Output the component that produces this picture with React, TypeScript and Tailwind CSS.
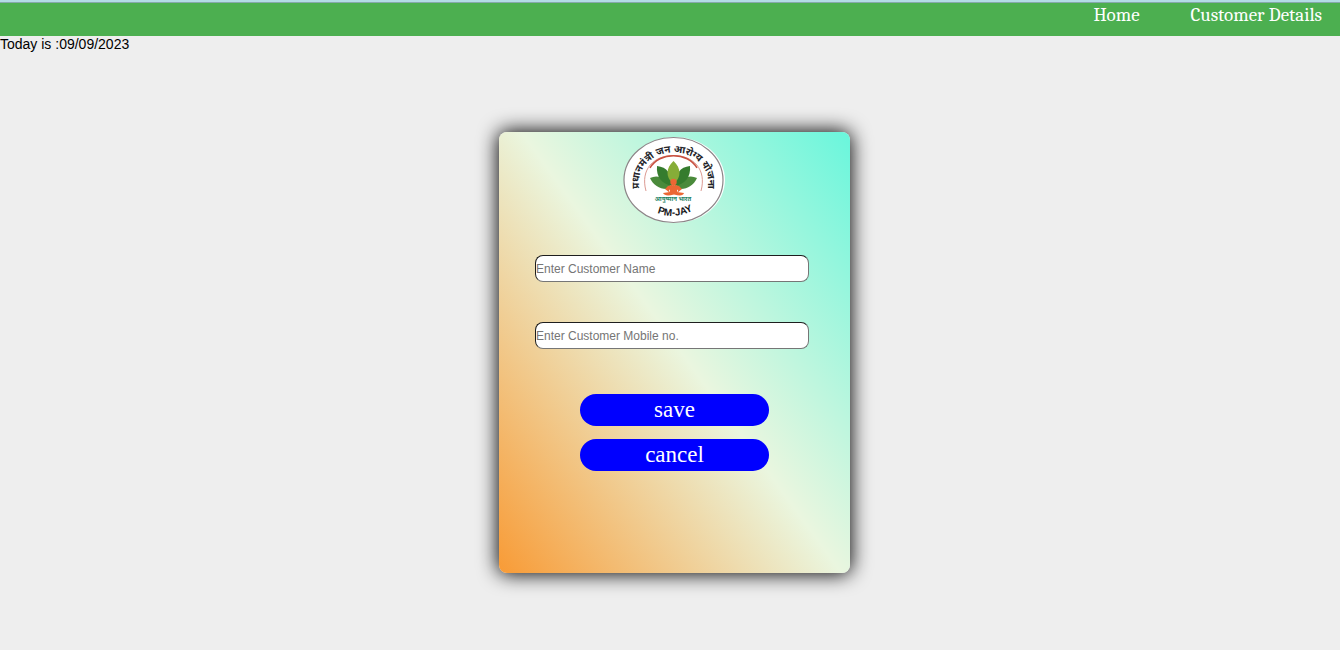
import React from "react";

function Logo() {
  return (
    <svg
      viewBox="0 0 102 88"
      className="h-[88px] w-[102px]"
      role="img"
      aria-label="PM-JAY"
    >
      <defs>
        <path id="logo-arc" d="M16 54 L16 46 A34.500 29.500 0 0 1 85 46 L85 54" />
        <path id="logo-bottom" d="M28 74 Q51 87 76 71" />
      </defs>
      <ellipse cx="52" cy="44" rx="50" ry="43" fill="#fdffff" />
      <ellipse cx="50.500" cy="44" rx="49.500" ry="42.500" fill="#fff" stroke="#8d8588" strokeWidth="1.200" />
      <path d="M23 55 C17 33 31 19.500 50.500 19.500 C70 19.500 84 33 78 55" fill="none" stroke="#dc9a92" strokeWidth="1" />
      <path d="M27 32 C36 15.500 65 15.500 74 32" fill="none" stroke="#c9503f" strokeWidth="1.500" />
      <g>
        <path d="M49 52 C43 42 35 38 27 42 C31 51 40 55 49 52Z" fill="#4a8a3b" />
        <path d="M52 52 C58 42 66 38 74 42 C70 51 61 55 52 52Z" fill="#4a8a3b" />
        <path d="M49 50 C49 38 44 31 34 30 C33 41 39 48 49 50Z" fill="#357c2e" />
        <path d="M52 50 C52 38 57 31 67 30 C68 41 62 48 52 50Z" fill="#357c2e" />
        <path d="M50.500 48 C42 41 43 32 50.500 25 C58 32 59 41 50.500 48Z" fill="#86ad38" />
      </g>
      <g fill="#ec6734">
        <circle cx="50.500" cy="46" r="3.200" />
        <path d="M45 50 Q50.500 48 56 50 L59 53 L54 57 L55 54 Q50 52 46 54 L47 57 L42 53Z" />
        <path d="M47 53 H54 L54 56 L61 57 Q60 61 51 58.500 Q42 61 40 57 L47 56Z" />
      </g>
      <g fontFamily="'Noto Sans Devanagari', 'Noto Sans', sans-serif" fontWeight="700" fill="#24252a">
        <text fontSize="10" textAnchor="middle">
          <textPath href="#logo-arc" startOffset="50%">प्रधानमंत्री जन आरोग्य योजना</textPath>
        </text>
        <text x="50" y="65" fontSize="6" textAnchor="middle" fill="#248263">आयुष्मान भारत</text>
      </g>
      <text fontFamily="'Liberation Sans', sans-serif" fontSize="10" fontWeight="700" textAnchor="middle" fill="#171719">
        <textPath href="#logo-bottom" startOffset="50%">PM-JAY</textPath>
      </text>
    </svg>
  );
}

const fieldClass =
  "block h-[27px] w-full rounded-lg border border-t-[#1e1e1e] border-l-[#1e1e1e] border-r-[#767676] border-b-[#767676] bg-white text-xs text-black placeholder:text-[#757575]";
const buttonClass =
  "h-8 w-[189px] rounded-full bg-[#0000ff] font-['Liberation_Serif',serif] text-[23px] leading-8 text-white";

export default function App() {
  return (
    <div className="min-h-screen bg-[#eeeeee] font-['Liberation_Sans',Arial,sans-serif] text-black">
      <header className="h-9 border-t-2 border-[#b3dce6] bg-[#4caf50]">
        <nav className="flex justify-end gap-[51px] border-t border-[#86a9ac] pr-[18px] font-[Cambria,'Liberation_Serif',serif] text-[19px] leading-[25px] text-white">
          <a href="#home">Home</a>
          <a href="#customers">Customer Details</a>
        </nav>
      </header>
      <p className="text-sm leading-4">Today is :09/09/2023</p>
      <main className="flex justify-center pt-20 pb-16 pl-[9px]">
        <form className="flex w-[351px] flex-col items-center rounded-lg bg-[linear-gradient(54deg,#f89b36_0%,#eaf6df_51%,#69f6dc_100%)] pt-1 pr-[41px] pb-[102px] pl-9 shadow-[0_0_20px_1px_#000000]" onSubmit={(e) => e.preventDefault()}>
          <div className="ml-[3px]">
            <Logo />
          </div>
          <input aria-label="Customer name" placeholder="Enter Customer Name" className={`${fieldClass} mt-[31px]`} />
          <input aria-label="Customer mobile number" type="tel" placeholder="Enter Customer Mobile no." className={`${fieldClass} mt-10`} />
          <div className="mt-[45px] ml-[5px] flex flex-col gap-[13px]">
            <button type="submit" className={buttonClass}>save</button>
            <button type="button" className={buttonClass}>cancel</button>
          </div>
        </form>
      </main>
    </div>
  );
}
